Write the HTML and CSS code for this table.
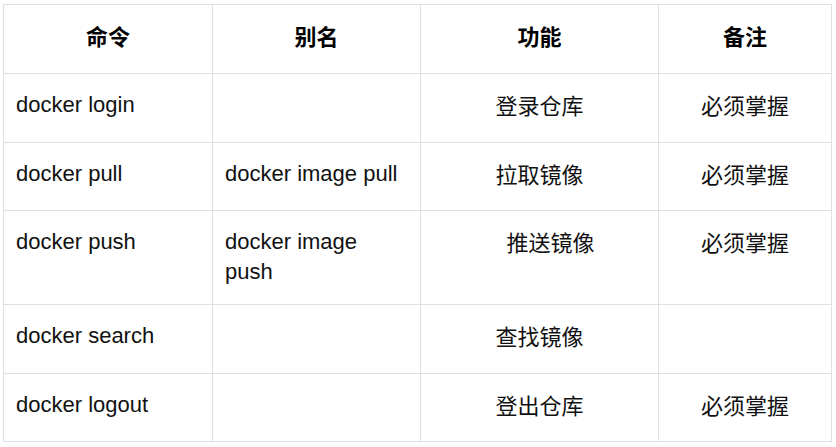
FILE: index.html
```html
<!DOCTYPE html>
<html lang="zh">
<head>
<meta charset="utf-8">
<title>docker 命令</title>
<link rel="stylesheet" href="styles.css">
</head>
<body>
<div class="wrap">
<table class="cmd-table">
  <colgroup>
    <col class="c1"><col class="c2"><col class="c3"><col class="c4">
  </colgroup>
  <thead>
    <tr class="r-head">
      <th>命令</th><th>别名</th><th>功能</th><th>备注</th>
    </tr>
  </thead>
  <tbody>
    <tr class="r69">
      <td>docker login</td><td></td><td class="center">登录仓库</td><td class="center">必须掌握</td>
    </tr>
    <tr class="r68">
      <td>docker pull</td><td>docker image pull</td><td class="center">拉取镜像</td><td class="center">必须掌握</td>
    </tr>
    <tr class="r94">
      <td>docker push</td><td>docker image push</td><td class="center">　推送镜像</td><td class="center">必须掌握</td>
    </tr>
    <tr class="r69">
      <td>docker search</td><td></td><td class="center">查找镜像</td><td class="center"></td>
    </tr>
    <tr class="r68">
      <td>docker logout</td><td></td><td class="center">登出仓库</td><td class="center">必须掌握</td>
    </tr>
  </tbody>
</table>
</div>
</body>
</html>
```
FILE: styles.css
```css
html, body {
  margin: 0;
  padding: 0;
  background: #ffffff;
}
.wrap {
  padding: 4px 0 0 3px;
}
.cmd-table {
  border-collapse: collapse;
  table-layout: fixed;
  width: 828px;
  font-family: "Liberation Sans", Arial, "Noto Sans CJK SC", sans-serif;
  font-size: 22px;
  line-height: 30px;
  color: #111111;
}
.c1 { width: 209px; }
.c2 { width: 208px; }
.c3 { width: 238px; }
.c4 { width: 173px; }
.cmd-table th,
.cmd-table td {
  border: 1px solid #dfe0e5;
  padding: 16px 12px 16px;
  vertical-align: top;
  text-align: left;
}
.cmd-table th {
  font-weight: bold;
  text-align: center;
  color: #000000;
  padding-top: 18px;
  padding-bottom: 14px;
}
.cmd-table td.center {
  text-align: center;
  padding-top: 18px;
  padding-bottom: 14px;
}
.r-head { height: 69px; }
.r69 { height: 69px; }
.r68 { height: 68px; }
.r94 { height: 94px; }
```
